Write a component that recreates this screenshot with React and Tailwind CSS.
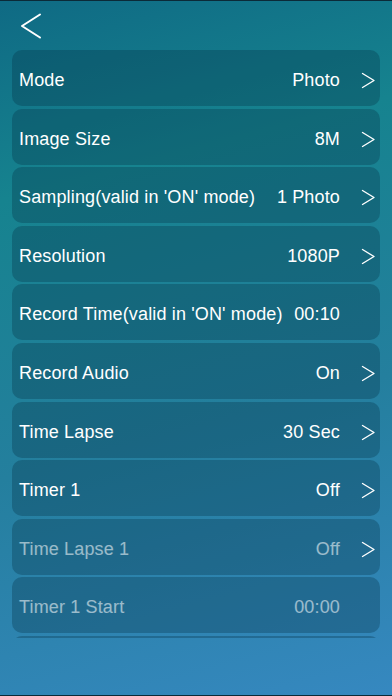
import React from "react";

const rows = [
  { label: "Mode", value: "Photo", arrow: true },
  { label: "Image Size", value: "8M", arrow: true },
  { label: "Sampling(valid in 'ON' mode)", value: "1 Photo", arrow: true },
  { label: "Resolution", value: "1080P", arrow: true },
  { label: "Record Time(valid in 'ON' mode)", value: "00:10", arrow: false },
  { label: "Record Audio", value: "On", arrow: true },
  { label: "Time Lapse", value: "30 Sec", arrow: true },
  { label: "Timer 1", value: "Off", arrow: true },
  { label: "Time Lapse 1", value: "Off", arrow: true, disabled: true },
  { label: "Timer 1 Start", value: "00:00", arrow: false, disabled: true },
  { label: "", value: "", arrow: false, disabled: true },
];

function Chevron({ className }) {
  return (
    <svg viewBox="0 0 14 16" className={className} fill="none">
      <path d="M1.5 1 L13 8 L1.5 15" stroke="white" strokeWidth="1.4" strokeLinecap="round" strokeLinejoin="round" />
    </svg>
  );
}

function Row({ label, value, arrow, disabled }) {
  const text = disabled ? "text-white/55" : "text-white";
  return (
    <div className="flex h-[56px] shrink-0 items-center rounded-[10px] bg-[#022d42]/30 pl-[7px] pr-[5px] pt-[5px]">
      <span className={`flex-1 whitespace-nowrap ${text}`}>{label}</span>
      <span className={`whitespace-nowrap ${text}`}>{value}</span>
      <div className="flex w-[35px] justify-end">
        {arrow && <Chevron className="h-[17px] w-[14px]" />}
      </div>
    </div>
  );
}

export default function App() {
  return (
    <div
      className="flex h-[696px] w-[392px] flex-col overflow-hidden border-y border-[#0b2a38] bg-[linear-gradient(165deg,#0f6a84_0%,#16838f_25%,#247f9e_60%,#3688c0_100%)] text-[18px] tracking-[0.15px]"
      style={{ fontFamily: '"Liberation Sans", Arial, sans-serif' }}
    >
      <div className="flex h-[49px] shrink-0 items-center pl-[20px]">
        <svg viewBox="0 0 22 26" className="h-[26px] w-[22px]" fill="none">
          <path d="M20 1.5 L2 13 L20 24.5" stroke="white" strokeWidth="2" strokeLinecap="round" strokeLinejoin="round" />
        </svg>
      </div>
      <div className="mx-[12px] flex h-[588px] flex-col gap-[2.6px] overflow-hidden">
        {rows.map((r, i) => (
          <Row key={i} {...r} />
        ))}
      </div>
    </div>
  );
}
